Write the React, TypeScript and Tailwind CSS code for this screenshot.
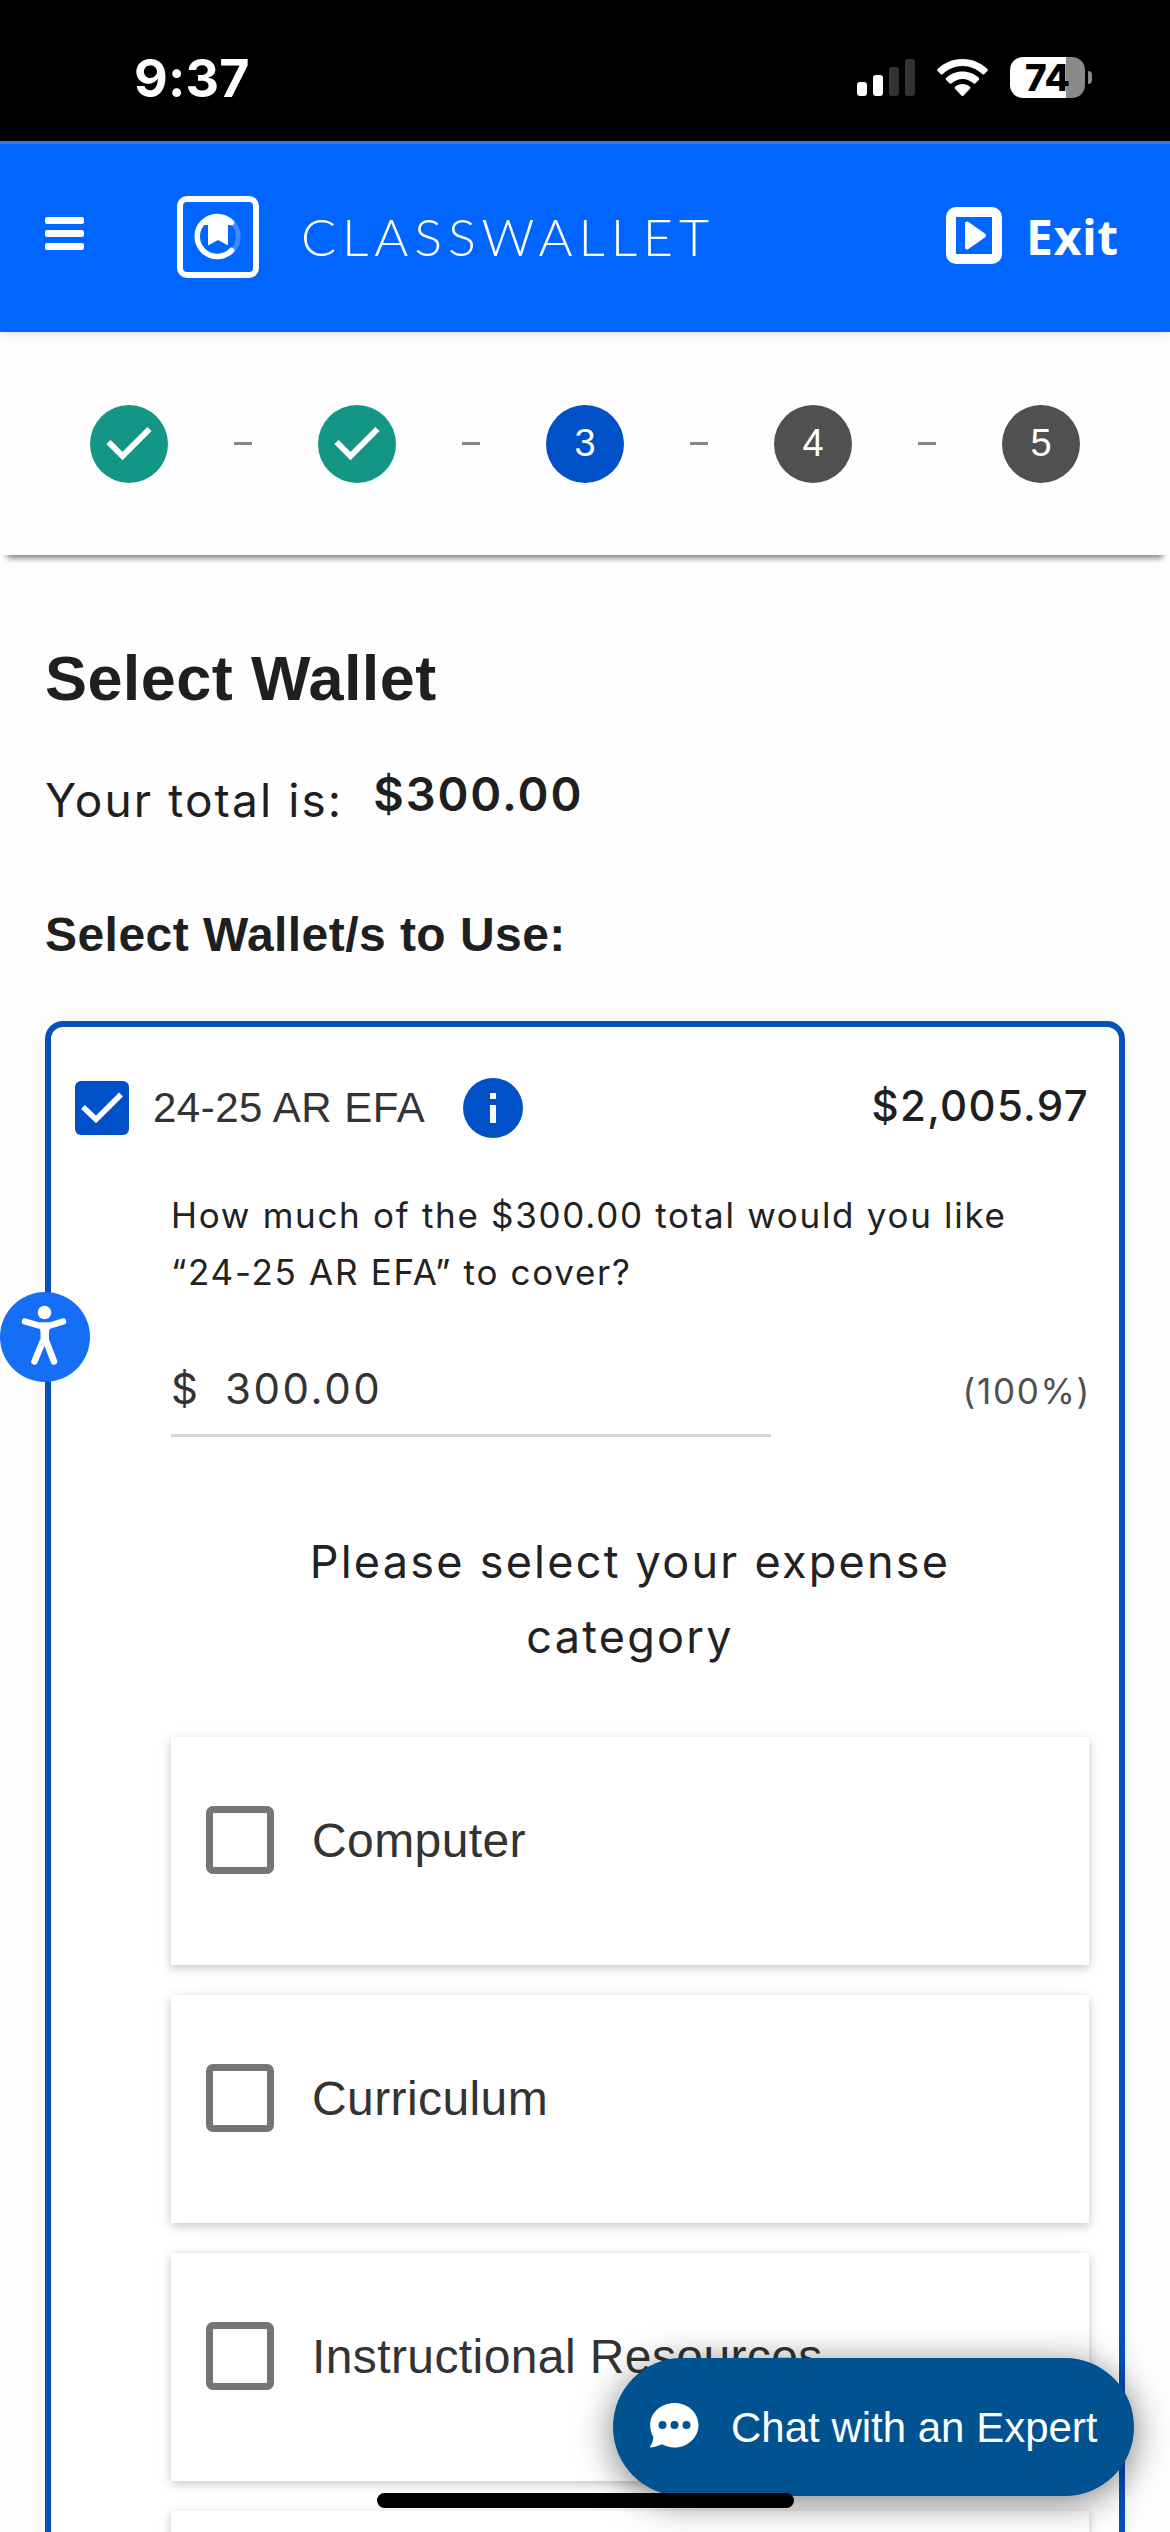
import React from "react";

type Step = {
  label: string;
  state: "done" | "current" | "pending";
};

const steps: Step[] = [
  { label: "1", state: "done" },
  { label: "2", state: "done" },
  { label: "3", state: "current" },
  { label: "4", state: "pending" },
  { label: "5", state: "pending" },
];

const stepColors = {
  done: "bg-[#149686]",
  current: "bg-[#0050c8]",
  pending: "bg-[#505050]",
};

const categories = ["Computer", "Curriculum", "Instructional Resources", ""];

const StatusBar: React.FC = () => {
  return (
    <div className="flex h-[141px] shrink-0 items-start justify-between bg-black pl-[134px] pr-[78px]">
      <span className="mt-[49px] font-['Inter'] text-[52px] leading-[60px] font-bold tracking-[0.2px] text-white">
        9:37
      </span>
      <div className="mt-[57px] flex items-start">
        <svg className="mt-[2px]" width="58" height="37" viewBox="0 0 58 37">
          <rect x="0" y="23" width="10" height="14" rx="3" fill="#fff" />
          <rect x="16" y="16" width="10" height="21" rx="3" fill="#fff" />
          <rect x="32" y="8" width="10" height="29" rx="3" fill="#333" />
          <rect x="48" y="0" width="10" height="37" rx="3" fill="#333" />
        </svg>
        <svg className="mt-[2px] ml-[22px]" width="51" height="37" viewBox="0 0 51 37" fill="#fff">
          <path d="M25.5 0C35.5 0 44 4 50.2 9.8c.8.7.8 1.5.1 2.2l-2.9 3c-.7.7-1.5.7-2.2 0C39.9 10 33 7 25.5 7S11.1 10 5.8 15c-.7.7-1.5.7-2.2 0l-2.9-3c-.7-.7-.7-1.5.1-2.2C7 4 15.5 0 25.5 0z" />
          <path d="M25.5 12.5c6.5 0 12 2.5 16.2 6.2.7.7.7 1.5.1 2.2l-3.3 3.3c-.7.7-1.4.7-2.2.1-3-2.7-6.6-4.3-10.8-4.3s-7.8 1.6-10.8 4.3c-.8.6-1.5.6-2.2-.1l-3.3-3.3c-.6-.7-.6-1.5.1-2.2 4.2-3.7 9.7-6.2 16.2-6.2z" />
          <path d="M25.5 25c2.8 0 5.4 1 7.4 2.7.7.6.7 1.4.1 2l-6.4 6.7c-.7.7-1.5.7-2.2 0L18 29.7c-.6-.6-.6-1.4.1-2C20.1 26 22.7 25 25.5 25z" />
        </svg>
        <div className="ml-[22px] flex items-center">
          <div className="flex h-[41px] w-[75px] items-center justify-center rounded-[13px] bg-[linear-gradient(to_right,#fff_75%,#8a8a8a_75%)]">
            <span className="font-['Inter'] text-[37px] leading-[41px] font-extrabold text-black">
              74
            </span>
          </div>
          <div className="ml-[3px] h-[13px] w-[4px] rounded-r-full bg-[#8a8a8a]" />
        </div>
      </div>
    </div>
  );
};

const Logo: React.FC = () => {
  return (
    <svg width="82" height="82" viewBox="0 0 82 82" fill="none">
      <rect x="3" y="3" width="76" height="76" rx="7" stroke="#fff" strokeWidth="6" />
      <path d="M54.5 25.5A20 20 0 0 1 54.5 55.5" stroke="#3d8bff" strokeWidth="5" />
      <path
        d="M54.5 26.5A20 20 0 1 0 54.5 54.5"
        stroke="#fff"
        strokeWidth="5.5"
        strokeLinecap="round"
      />
      <path d="M31 21h20v28.5l-10-5.5-10 5.5z" fill="#fff" />
      <path d="M25 28c8-9 22-10 31-2l-3 3H25z" fill="#fff" />
    </svg>
  );
};

const Header: React.FC = () => {
  return (
    <header className="flex h-[191px] shrink-0 items-center border-t-[3px] border-[#3a78e0] bg-[#0066ff] pr-[51px] pb-[2px] pl-[45px] text-white shadow-[0_2px_12px_rgba(0,40,40,0.12)]">
      <div className="mb-[8px] flex w-[39px] flex-col gap-[6px]">
        <span className="h-[7px] rounded-[2px] bg-white" />
        <span className="h-[7px] rounded-[2px] bg-white" />
        <span className="h-[7px] rounded-[2px] bg-white" />
      </div>
      <div className="ml-[93px]">
        <Logo />
      </div>
      <span className="mb-[2px] ml-[42px] font-['Lato'] text-[52px] leading-[60px] font-light tracking-[5.9px]">
        CLASSWALLET
      </span>
      <div className="ml-auto flex items-center">
        <svg className="mb-[4px]" width="56" height="57" viewBox="0 0 56 57" fill="none">
          <rect x="5" y="5" width="46" height="47" rx="5" stroke="#fff" strokeWidth="10" />
          <path
            d="M21 16.5v24L38 28.5z"
            fill="#fff"
            stroke="#fff"
            strokeWidth="4"
            strokeLinejoin="round"
          />
        </svg>
        <span className="ml-[24px] font-['Noto_Sans'] text-[48px] leading-[60px] font-bold tracking-[0.8px]">
          Exit
        </span>
      </div>
    </header>
  );
};

const Stepper: React.FC = () => {
  return (
    <ol className="flex h-[223px] shrink-0 items-center justify-between px-[90px] shadow-[0_10px_6px_-7px_rgba(0,0,0,0.5)]">
      {steps.map((step, i) => (
        <React.Fragment key={step.label}>
          {i > 0 && <li className="h-[3px] w-[18px] bg-[#868686]" />}
          <li
            className={`flex size-[78px] items-center justify-center rounded-full font-['Liberation_Sans'] text-[38px] text-white ${stepColors[step.state]}`}
          >
            {step.state === "done" ? (
              <svg width="78" height="78" viewBox="0 0 78 78" fill="none">
                <path d="M18.5 37L32.5 51L59.5 24" stroke="#fff" strokeWidth="6" />
              </svg>
            ) : (
              step.label
            )}
          </li>
        </React.Fragment>
      ))}
    </ol>
  );
};

const CategoryCard: React.FC<{ name: string }> = ({ name }) => {
  return (
    <label className="flex h-[228px] shrink-0 items-start bg-white pt-[69px] pl-[35px] shadow-[0_3px_9px_rgba(0,0,0,0.2),0_3px_24px_rgba(0,0,0,0.04)]">
      <span className="size-[68px] rounded-[7px] border-[7px] border-[#757575]" />
      <span className="ml-[38px] font-['Liberation_Sans'] text-[48px] leading-[69px] tracking-[0.4px] text-[#333]">
        {name}
      </span>
    </label>
  );
};

const WalletCard: React.FC = () => {
  return (
    <section className="mt-[56px] h-[1600px] rounded-[18px] border-[6px] border-[#0550bb] bg-white pr-[30px] pl-[24px] shadow-[0_0_24px_rgba(0,0,80,0.05)]">
      <div className="mt-[51px] flex h-[60px] items-center">
        <svg width="54" height="54" viewBox="0 0 54 54" fill="none">
          <rect width="54" height="54" rx="6" fill="#0050c8" />
          <path d="M8 26L21 38.5L46 13.5" stroke="#fff" strokeWidth="5.5" />
        </svg>
        <span className="ml-[24px] font-['Liberation_Sans'] text-[42px] leading-[60px] tracking-[0.5px] text-[#333]">
          24-25 AR EFA
        </span>
        <svg className="ml-[38px]" width="60" height="60" viewBox="0 0 60 60" fill="#fff">
          <circle cx="30" cy="30" r="30" fill="#0050c8" />
          <rect x="27" y="15" width="6" height="6" />
          <rect x="27" y="27" width="6" height="18" />
        </svg>
        <span className="mb-[5px] ml-auto text-[42px] font-medium tracking-[1.3px] text-[#1f1f1f]">
          $2,005.97
        </span>
      </div>

      <div className="ml-[96px]">
        <p className="mt-[49px] text-[35px] leading-[57px] tracking-[1.7px] whitespace-nowrap text-[#222]">
          How much of the $300.00 total would you like
          <br />
          “24-25 AR EFA” to cover?
        </p>
        <div className="mt-[43px] flex justify-between">
          <div className="flex h-[93px] w-[600px] border-b-[3px] border-[#d6d6d6] text-[42px] leading-[89px] text-[#333]">
            <span>$</span>
            <span className="ml-[27px] tracking-[2.6px]">300.00</span>
          </div>
          <span className="mr-[-2px] text-[35px] leading-[94px] tracking-[1.7px] text-[#505050]">
            (100%)
          </span>
        </div>
        <p className="mt-[86px] text-center text-[45px] leading-[75px] tracking-[2.25px] text-[#222]">
          Please select your expense
          <br />
          category
        </p>
        <div className="mt-[63px] flex flex-col gap-[30px]">
          {categories.map((name, i) => (
            <CategoryCard key={i} name={name} />
          ))}
        </div>
      </div>
    </section>
  );
};

const AccessibilityButton: React.FC = () => {
  return (
    <button className="absolute top-[1292px] left-0 size-[90px] rounded-full bg-[#146ef6]">
      <svg width="90" height="90" viewBox="0 0 90 90" fill="#fff">
        <circle cx="44.5" cy="20.5" r="6.8" />
        <path
          d="M25 29.5L39 33.5H50L63 29.5M44.5 36V50M42.5 50L34.5 69.5M46.5 50L54 69.5"
          fill="none"
          stroke="#fff"
          strokeWidth="6.5"
          strokeLinecap="round"
          strokeLinejoin="round"
        />
        <path d="M39 32h11.5l-1.5 8v8l2 8-6.5-3-6.5 3 2.5-8v-8z" />
      </svg>
    </button>
  );
};

const ChatButton: React.FC = () => {
  return (
    <button className="absolute top-[2358px] left-[613px] flex h-[138px] w-[521px] items-center rounded-full bg-[#005291] pl-[37px] shadow-[0_6px_36px_rgba(0,0,0,0.5)]">
      <svg className="mb-[3px]" width="49" height="46" viewBox="0 0 49 46" fill="#fff">
        <path d="M24.5 0C38 0 48.5 9.8 48.5 22S38 44.5 24.5 44.5c-5 0-9-1.2-12.5-3.2C8.5 42.5 5 44.5 1 44.5c-1 0-1.3-.8-.7-1.5 2.2-2.5 3-6 3-9C1.2 30.500.2 26.500.2 22 .2 9.8 11 0 24.5 0z" />
        <g fill="#005291">
          <circle cx="12.5" cy="22" r="4" />
          <circle cx="24.5" cy="22" r="4" />
          <circle cx="36.5" cy="22" r="4" />
        </g>
      </svg>
      <span className="ml-[32px] font-['Liberation_Sans'] text-[42px] whitespace-nowrap text-white">
        Chat with an Expert
      </span>
    </button>
  );
};

const App: React.FC = () => {
  return (
    <div className="relative flex h-[2532px] w-[1170px] flex-col overflow-hidden bg-[#fefefe] font-['Inter',sans-serif] text-[#1f1f1f]">
      <StatusBar />
      <Header />
      <Stepper />
      <main className="px-[45px]">
        <h1 className="mt-[85px] font-['Liberation_Sans'] text-[63px] leading-[76px] font-bold tracking-[0.4px]">
          Select Wallet
        </h1>
        <div className="mt-[48px] flex items-center">
          <span className="text-[46px] leading-[72px] tracking-[2.1px]">Your total is:</span>
          <span className="ml-[30px] pb-[12px] text-[47px] leading-[60px] font-semibold tracking-[1.9px]">
            $300.00
          </span>
        </div>
        <h2 className="mt-[69px] font-['Liberation_Sans'] text-[48px] leading-[60px] font-bold tracking-[0.45px]">
          Select Wallet/s to Use:
        </h2>
        <WalletCard />
      </main>
      <AccessibilityButton />
      <ChatButton />
      {/* home indicator */}
      <div className="absolute bottom-[24px] left-[377px] h-[15px] w-[417px] rounded-full bg-black" />
    </div>
  );
};

export default App;
